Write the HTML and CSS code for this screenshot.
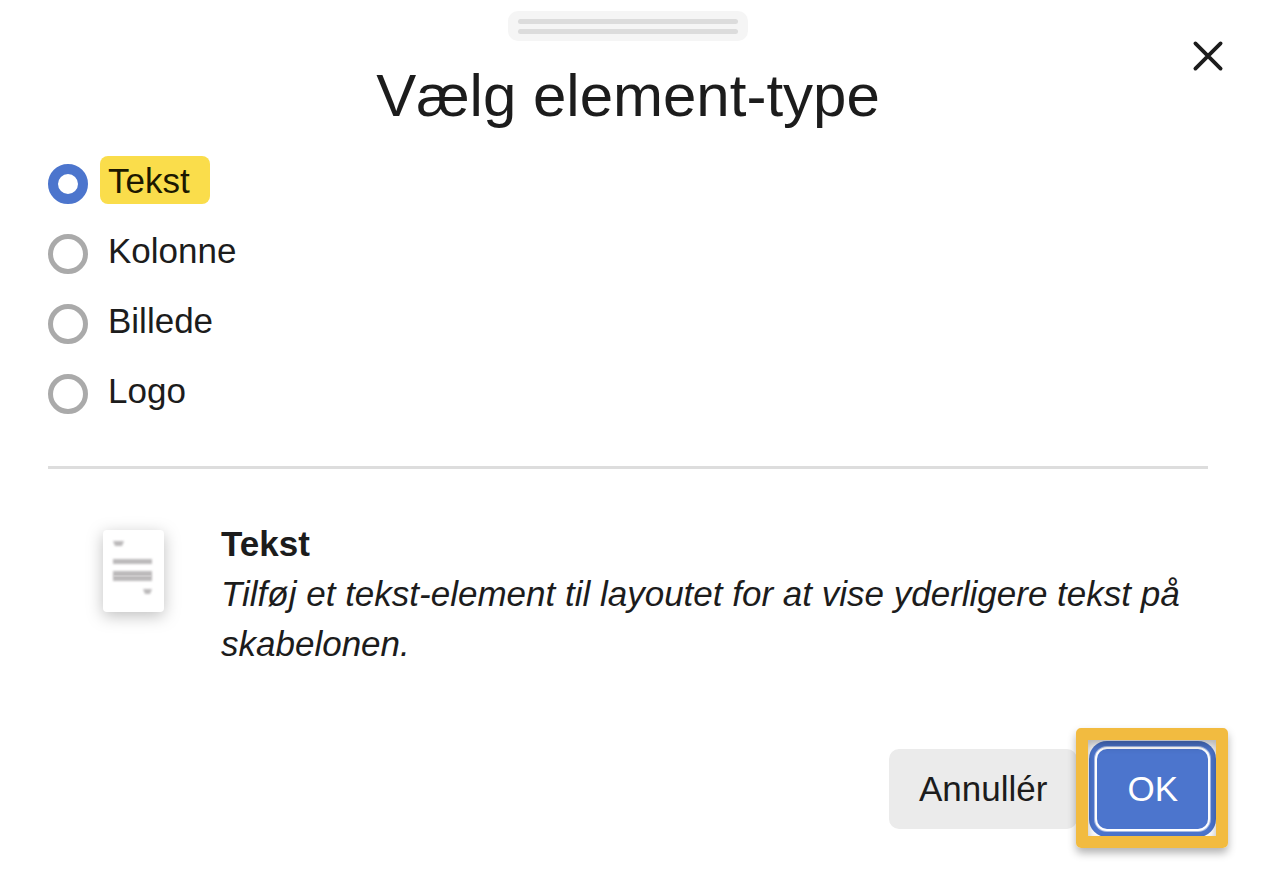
FILE: index.html
```
<!DOCTYPE html>
<html lang="da">
<head>
    <meta charset="UTF-8">
    <meta name="viewport" content="width=device-width, initial-scale=1.0">
    <title>Vælg element-type</title>
    <link rel="stylesheet" href="styles.css">
</head>
<body>

    <form class="dialog">
        <div class="drag-handle">
            <span></span>
            <span></span>
        </div>
        <button type="button" class="close" aria-label="Luk">
            <svg width="32" height="32" viewBox="0 0 32 32">
                <path d="M3.4 3.4 L28.6 28.6 M28.6 3.4 L3.4 28.6" fill="none" stroke="#1c1c1c" stroke-width="3.8" stroke-linecap="round"/>
            </svg>
        </button>

        <h1>Vælg element-type</h1>

        <div class="options">
            <div class="option">
                <input type="radio" name="type" id="typeText" checked>
                <label for="typeText" class="highlight">Tekst</label>
            </div>
            <div class="option">
                <input type="radio" name="type" id="typeColumn">
                <label for="typeColumn">Kolonne</label>
            </div>
            <div class="option">
                <input type="radio" name="type" id="typeImage">
                <label for="typeImage">Billede</label>
            </div>
            <div class="option">
                <input type="radio" name="type" id="typeLogo">
                <label for="typeLogo">Logo</label>
            </div>
        </div>

        <div class="description">
            <svg class="doc-icon" width="62" height="82" viewBox="0 0 62 82">
                <rect width="61" height="82" rx="4" fill="#fff"/>
                <g class="doc-lines" fill="#bcbabb">
                    <path d="M10 11 H21 L19 16 H12 Z"/>
                    <rect x="10" y="29" width="39" height="5"/>
                    <rect x="10" y="41" width="39" height="5"/>
                    <rect x="10" y="46" width="39" height="5"/>
                    <path d="M40 59 H49 L47 64 H42 Z"/>
                </g>
                <path d="M10 46 H49" stroke="#d8d6d7"/>
            </svg>
            <div class="description-text">
                <strong>Tekst</strong>
                <p>Tilføj et tekst-element til layoutet for at vise yderligere tekst på skabelonen.</p>
            </div>
        </div>

        <div class="buttons">
            <button type="button" class="btn">Annullér</button>
            <div class="marked">
                <button type="submit" class="btn btn-primary">OK</button>
            </div>
        </div>
    </form>

</body>
</html>
```

FILE: styles.css
```
body {
    font-family: "Liberation Sans", Arial, sans-serif;
    font-size: 35px;
    line-height: 50px;
    color: #1c1c1c;
    background-color: #fff;
    margin: 0;
}

.dialog {
    position: relative;
    padding: 11px 56px 40px 48px;
}

.drag-handle {
    box-sizing: border-box;
    display: flex;
    flex-direction: column;
    gap: 5px;
    width: 240px;
    height: 30px;
    margin: 0 auto;
    padding: 8px 10px 7px;
    border-radius: 10px;
    background-color: #f5f5f5;
}

.drag-handle span {
    height: 5px;
    border-radius: 3px;
    background-color: #dcdcdc;
}

.close {
    position: absolute;
    top: 40px;
    right: 40px;
    padding: 0;
    border: none;
    background: none;
    cursor: pointer;
}

.close svg {
    display: block;
}

h1 {
    margin: 20px 0 25px;
    font-size: 60px;
    font-weight: normal;
    line-height: 70px;
    text-align: center;
}

.options {
    display: flex;
    flex-direction: column;
    gap: 22px;
    margin-top: 25px;
    padding-bottom: 52px;
    border-bottom: 3px solid #ddd;
}

.option {
    display: flex;
    gap: 12px;
    height: 48px;
}

.option input {
    appearance: none;
    box-sizing: border-box;
    width: 40px;
    height: 40px;
    margin: 8px 0 0;
    border: 5px solid #aaa;
    border-radius: 50%;
    background-color: #fff;
}

.option input:checked {
    border: 10px solid #4c75cd;
}

.option label {
    padding: 0 20px 0 8px;
    border-radius: 8px;
}

.option .highlight {
    background-color: #fadd4b;
    color: #1c1800;
}

.description {
    display: flex;
    gap: 56px;
    padding: 50px 20px 80px 55px;
}

.doc-icon {
    flex-shrink: 0;
    margin-top: 11px;
    overflow: visible;
    filter: drop-shadow(0 4px 8px rgba(0, 0, 0, 0.25));
}

.doc-lines {
    filter: blur(0.8px);
}

.description-text p {
    margin: 0;
    font-style: italic;
}

.description-text strong {
    display: block;
}

.buttons {
    display: flex;
    justify-content: flex-end;
    gap: 20px;
}

.btn {
    display: block;
    height: 80px;
    padding: 0 30px;
    border: none;
    border-radius: 10px;
    background-color: #ebebeb;
    color: #1c1c1c;
    font: inherit;
    cursor: pointer;
}

.btn-primary {
    background-color: #4c75cd;
    color: #fff;
    box-shadow: 0 0 0 2px #fff, 0 0 0 3px #a6bae6, 0 0 0 8px #4c75cd;
}

.marked {
    position: relative;
}

.marked::after {
    content: "";
    position: absolute;
    inset: -21px -20px -19px -21px;
    border: 12px solid #f2bb40;
    border-radius: 5px;
    box-shadow: 0 5px 8px rgba(0, 0, 0, 0.3), inset 0 5px 8px rgba(0, 0, 0, 0.3);
    pointer-events: none;
}
```
